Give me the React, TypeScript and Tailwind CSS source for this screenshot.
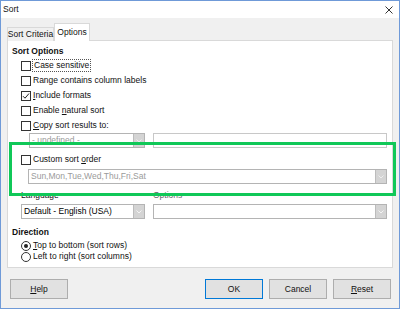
function Check({ checked }: { checked?: boolean }) {
  return (
    <span className="w-[10px] h-[10px] border border-[#333] bg-white flex items-center justify-center shrink-0">
      {checked && (
        <svg width="8" height="8" viewBox="0 0 8 8">
          <path d="M1 4.2 L3 6.2 L7 1.5" fill="none" stroke="#222" strokeWidth="1" />
        </svg>
      )}
    </span>
  );
}

function Radio({ on }: { on?: boolean }) {
  return (
    <span className="w-[10px] h-[10px] rounded-full border border-[#333] bg-white flex items-center justify-center shrink-0">
      {on && <span className="w-[4px] h-[4px] rounded-full bg-[#222]" />}
    </span>
  );
}

function Arrow({ disabled }: { disabled?: boolean }) {
  return (
    <span className="w-[11px] h-full bg-[#d4d4d4] border-l border-[#bcbcbc] flex items-center justify-center shrink-0">
      <svg width="6" height="4" viewBox="0 0 6 4">
        <path d="M0.5 0.5 L3 3 L5.5 0.5" fill="none" stroke={disabled ? "#eee" : "#f4f4f4"} strokeWidth="1" />
      </svg>
    </span>
  );
}

function Combo({ w, text, gray, className = "" }: { w: string; text?: string; gray?: boolean; className?: string }) {
  return (
    <div className={`${w} h-[15px] border border-[#b4b4b4] bg-white flex items-center ${className}`}>
      <span className={`flex-1 pl-[2px] leading-[13px] whitespace-nowrap ${gray ? "text-[#9a9a9a]" : "text-black"}`}>
        {text}
      </span>
      <Arrow disabled={gray} />
    </div>
  );
}

function Row({ children, className = "" }: { children: React.ReactNode; className?: string }) {
  return (
    <div className={`h-[15px] flex items-center pl-[9px] gap-[2px] whitespace-nowrap ${className}`}>{children}</div>
  );
}

function Btn({ children, primary }: { children: React.ReactNode; primary?: boolean }) {
  return (
    <div
      className={`w-[58px] h-[20px] flex items-center justify-center bg-[#e1e1e1] border ${
        primary ? "border-[#0078d7]" : "border-[#adadad]"
      }`}
    >
      {children}
    </div>
  );
}

export default function App() {
  return (
    <div
      className="w-[400px] h-[309px] border border-[#6f9ad8] bg-[#f0f0f0] flex flex-col text-[8.5px] text-[#111] overflow-hidden"
      style={{ fontFamily: '"Liberation Sans", Arial, sans-serif' }}
    >
      <div className="h-[17px] bg-white flex items-center justify-between pl-[2px] pr-[6px] shrink-0">
        <span>Sort</span>
        <svg width="8" height="8" viewBox="0 0 8 8">
          <path d="M0.5 0.5 L7.5 7.5 M7.5 0.5 L0.5 7.5" stroke="#333" strokeWidth="1" />
        </svg>
      </div>

      <div className="flex flex-col pl-[6px] pr-[6px] pt-[5px]">
        <div className="h-[17px] flex items-end relative z-10 whitespace-nowrap">
          <div className="h-[14px] w-[47px] border border-b-0 border-[#d9d9d9] bg-[#f0f0f0] flex items-center justify-center mb-[-1px]">
            Sort Criteria
          </div>
          <div className="h-[18px] w-[36px] border border-b-0 border-[#d9d9d9] bg-white flex items-center justify-center mb-[-1px]">
            Options
          </div>
        </div>

        <div className="relative h-[228px] border border-[#d9d9d9] bg-white pl-[4px] pr-[5px] pt-[3px] flex flex-col">
          <div className="h-[14px] flex items-center font-bold">Sort Options</div>
          <Row>
            <Check />
            <span className="outline-1 outline-dotted outline-[#555] px-[1px] leading-[11px]">Case sensitive</span>
          </Row>
          <Row>
            <Check />
            <span>Range contains column labels</span>
          </Row>
          <Row>
            <Check checked />
            <span>
              <u>I</u>nclude formats
            </span>
          </Row>
          <Row>
            <Check />
            <span>
              Enable <u>n</u>atural sort
            </span>
          </Row>
          <Row>
            <Check />
            <span>
              <u>C</u>opy sort results to:
            </span>
          </Row>
          <div className="h-[15px] flex items-center gap-[8px] pl-[17px]">
            <Combo w="w-[116px]" text="- undefined -" gray className="bg-[#f7f7f7]" />
            <div className="w-[234px] h-[15px] border border-[#c8c8c8] bg-white" />
          </div>
          <Row className="mt-[4px] h-[14px]">
            <Check />
            <span>
              Custom sort <u>o</u>rder
            </span>
          </Row>
          <div className="pl-[16px] mt-[2px]">
            <Combo w="w-[359px]" text="Sun,Mon,Tue,Wed,Thu,Fri,Sat" gray />
          </div>
          <div className="h-[13px] mt-[5px] flex items-center pl-[9px]">
            <span className="w-[132px]">Language</span>
            <span className="text-[#666]">Options</span>
          </div>
          <div className="flex items-center gap-[8px] pl-[9px] mt-[2px]">
            <Combo w="w-[124px]" text="Default - English (USA)" />
            <Combo w="w-[234px]" />
          </div>
          <div className="h-[14px] mt-[6px] flex items-center font-bold">Direction</div>
          <div className="h-[11px] flex items-center pl-[9px] gap-[2px] mt-[1px] whitespace-nowrap">
            <Radio on />
            <span>
              <u>T</u>op to bottom (sort rows)
            </span>
          </div>
          <div className="h-[11px] flex items-center pl-[9px] gap-[2px] whitespace-nowrap">
            <Radio />
            <span>Left to right (sort columns)</span>
          </div>

          <div className="absolute left-[1px] top-[101px] w-[387px] h-[54px] border-[3px] border-[#10c858] pointer-events-none" />
        </div>

        <div className="flex items-center mt-[11px] pl-[3px] pr-[2px]">
          <Btn>
            <span>
              <u>H</u>elp
            </span>
          </Btn>
          <div className="flex-1" />
          <div className="flex gap-[6px]">
            <Btn primary>OK</Btn>
            <Btn>Cancel</Btn>
            <Btn>
              <span>
                <u>R</u>eset
              </span>
            </Btn>
          </div>
        </div>
      </div>
    </div>
  );
}
